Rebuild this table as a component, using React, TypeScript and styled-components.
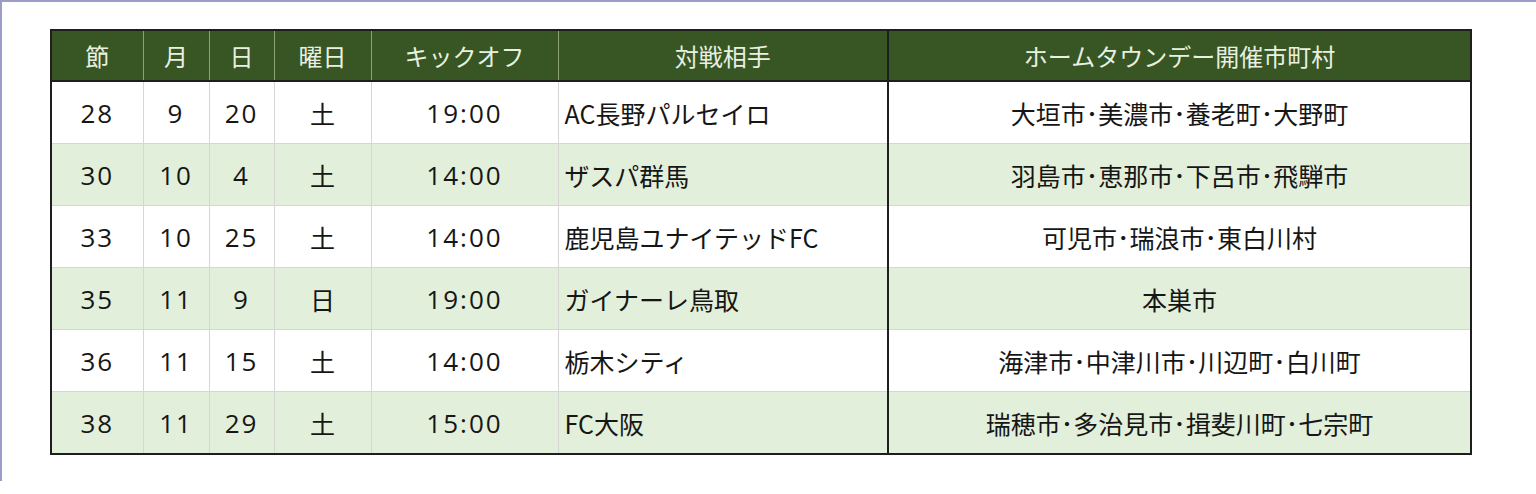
import React from 'react';
import styled, { createGlobalStyle } from 'styled-components';

const GlobalStyle = createGlobalStyle`
  html, body {
    margin: 0;
    padding: 0;
    background: #ffffff;
  }
  body {
    font-family: 'Noto Sans CJK JP', 'Open Sans', sans-serif;
  }
`;

type Match = {
  sec: string;
  month: string;
  day: string;
  week: string;
  kickoff: string;
  opponent: string;
  towns: string;
};

const matches: Match[] = [
  { sec: '28', month: '9', day: '20', week: '土', kickoff: '19:00', opponent: 'AC長野パルセイロ', towns: '大垣市･美濃市･養老町･大野町' },
  { sec: '30', month: '10', day: '4', week: '土', kickoff: '14:00', opponent: 'ザスパ群馬', towns: '羽島市･恵那市･下呂市･飛騨市' },
  { sec: '33', month: '10', day: '25', week: '土', kickoff: '14:00', opponent: '鹿児島ユナイテッドFC', towns: '可児市･瑞浪市･東白川村' },
  { sec: '35', month: '11', day: '9', week: '日', kickoff: '19:00', opponent: 'ガイナーレ鳥取', towns: '本巣市' },
  { sec: '36', month: '11', day: '15', week: '土', kickoff: '14:00', opponent: '栃木シティ', towns: '海津市･中津川市･川辺町･白川町' },
  { sec: '38', month: '11', day: '29', week: '土', kickoff: '15:00', opponent: 'FC大阪', towns: '瑞穂市･多治見市･揖斐川町･七宗町' },
];

const widths = [92, 66, 65, 97, 187, 330, 583];
const headers = ['節', '月', '日', '曜日', 'キックオフ', '対戦相手', 'ホームタウンデー開催市町村'];

const App = () => {
  return (
    <>
      <GlobalStyle />
      <Frame>
        <Table>
          <colgroup>
            {widths.map((w, i) => (
              <col key={i} style={{ width: w }} />
            ))}
          </colgroup>
          <thead>
            <tr>
              {headers.map((h, i) => (
                <HeadCell key={h} $divider={i === 6}>
                  {h}
                </HeadCell>
              ))}
            </tr>
          </thead>
          <tbody>
            {matches.map((m, i) => (
              <Row key={m.sec} $alt={i % 2 === 1}>
                <Cell $numeric>{m.sec}</Cell>
                <Cell $numeric>{m.month}</Cell>
                <Cell $numeric>{m.day}</Cell>
                <Cell>{m.week}</Cell>
                <Cell $numeric>{m.kickoff}</Cell>
                <Cell $align='left'>{m.opponent}</Cell>
                <Cell $divider>{m.towns}</Cell>
              </Row>
            ))}
          </tbody>
        </Table>
      </Frame>
    </>
  );
};

const Frame = styled.div`
  box-sizing: border-box;
  height: 481px;
  border-top: 2px solid #9c9cc9;
  border-left: 2px solid #9c9cc9;
  padding: 27px 0 0 48px;
`;

const Table = styled.table`
  table-layout: fixed;
  border-collapse: collapse;
  width: 1420px;
  border: 2px solid #1e1e1e;
`;

const HeadCell = styled.th<{ $divider?: boolean }>`
  height: 49px;
  padding: 0;
  background: #375623;
  color: #e9f0e1;
  font-size: 24px;
  font-weight: 400;
  text-align: center;
  border-bottom: 2px solid #1e1e1e;
  border-left: ${(p) => (p.$divider ? '2px solid #1e1e1e' : '1px solid #8ca277')};
`;

const Row = styled.tr<{ $alt?: boolean }>`
  background: ${(p) => (p.$alt ? '#e2efda' : '#ffffff')};
`;

const Cell = styled.td<{ $numeric?: boolean; $align?: 'left' | 'center'; $divider?: boolean }>`
  height: 61px;
  padding: ${(p) => (p.$align === 'left' ? '0 0 0 6px' : '0')};
  color: #161616;
  font-family: ${(p) => (p.$numeric ? "'Open Sans', 'Noto Sans CJK JP', sans-serif" : "'Noto Sans CJK JP', 'Open Sans', sans-serif")};
  font-size: ${(p) => (p.$numeric ? '26px' : '25px')};
  letter-spacing: ${(p) => (p.$numeric ? '2px' : '0')};
  text-align: ${(p) => p.$align ?? 'center'};
  white-space: nowrap;
  border-top: 1px solid #d6d6d6;
  border-left: ${(p) => (p.$divider ? '2px solid #1e1e1e' : '1px solid #d6d6d6')};
`;

export default App;
